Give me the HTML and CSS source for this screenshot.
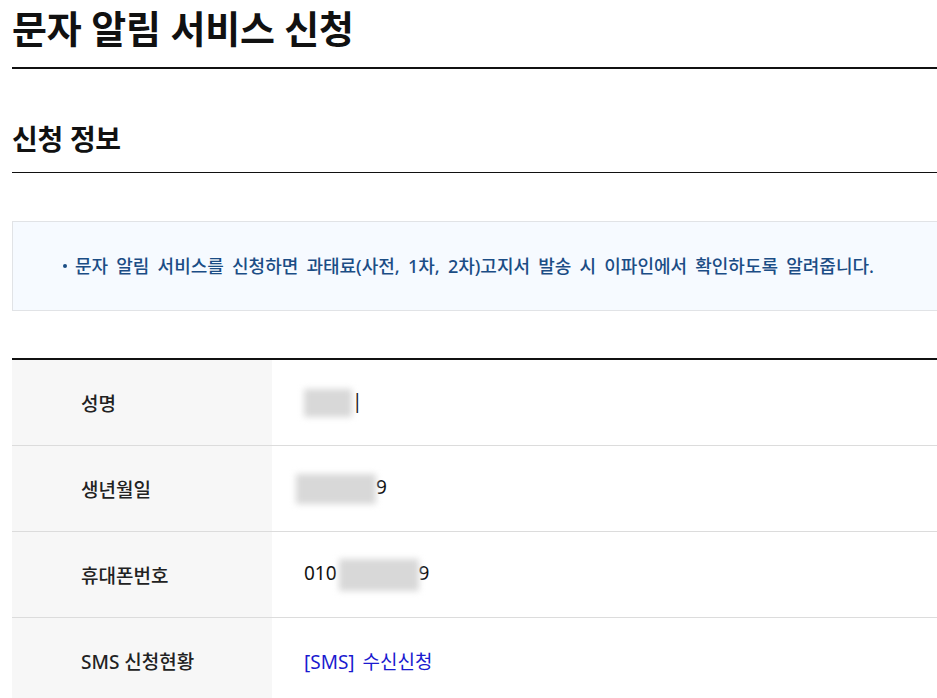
FILE: index.html
```html
<!DOCTYPE html>
<html lang="ko">
<head>
<meta charset="utf-8">
<title>문자 알림 서비스 신청</title>
<link rel="stylesheet" href="styles.css">
</head>
<body>
<div class="page">
  <h1 class="page-title">문자 알림 서비스 신청</h1>
  <h2 class="section-title">신청 정보</h2>
  <div class="notice">
    <ul class="notice-list">
      <li class="notice-item"><span class="dot"></span>문자 알림 서비스를 신청하면 과태료(사전, 1차, 2차)고지서 발송 시 이파인에서 확인하도록 알려줍니다.</li>
    </ul>
  </div>
  <table class="info-table">
    <tbody>
      <tr>
        <th>성명</th>
        <td><span class="mask mask-name"></span><span class="tail">|</span></td>
      </tr>
      <tr>
        <th>생년월일</th>
        <td><span class="mask mask-birth"></span>9</td>
      </tr>
      <tr>
        <th>휴대폰번호</th>
        <td>010<span class="mask mask-phone"></span>9</td>
      </tr>
      <tr>
        <th>SMS 신청현황</th>
        <td><a class="sms-link" href="#">[SMS] 수신신청</a></td>
      </tr>
    </tbody>
  </table>
</div>
</body>
</html>
```
FILE: styles.css
```css
html, body {
  margin: 0;
  padding: 0;
  background: #fff;
  overflow: hidden;
}
body {
  font-family: "Noto Sans", "Noto Sans CJK KR", sans-serif;
  color: #111;
}
.page {
  width: 1100px;
  padding-left: 12px;
}
.page-title {
  margin: 0;
  font-size: 38px;
  font-weight: 700;
  line-height: 56px;
  padding-bottom: 11px;
  border-bottom: 2px solid #111;
  letter-spacing: -0.2px;
}
.section-title {
  margin: 50px 0 0;
  font-size: 28px;
  font-weight: 700;
  line-height: 40px;
  padding-bottom: 13px;
  border-bottom: 1px solid #111;
  letter-spacing: -0.3px;
}
.notice {
  margin-top: 48px;
  background: #f6faff;
  border: 1px solid #e1e3e6;
  padding: 31px 0 31px 50px;
}
.notice-list {
  list-style: none;
  margin: 0;
  padding: 0;
}
.notice-item {
  font-size: 18px;
  font-weight: 500;
  line-height: 26px;
  color: #1b4d85;
  display: flex;
  align-items: center;
  word-spacing: 3.5px;
}
.dot {
  width: 4px;
  height: 4px;
  border-radius: 50%;
  background: #1b4d85;
  margin-right: 8px;
}
.info-table {
  margin-top: 47px;
  width: 100%;
  border-collapse: collapse;
  border-top: 2px solid #111;
}
.info-table th,
.info-table td {
  height: 85px;
  padding: 0;
  border-bottom: 1px solid #dcdcdc;
  font-size: 19px;
  vertical-align: middle;
  text-align: left;
}
.info-table th {
  width: 191px;
  padding-left: 69px;
  background: #f7f7f7;
  font-weight: 500;
  color: #222;
}
.info-table td {
  padding-left: 32px;
  color: #111;
}
.mask {
  display: inline-block;
  vertical-align: middle;
  background: #d8d8d8;
  filter: blur(3px);
}
.mask-name {
  width: 48px;
  height: 28px;
}
.mask-birth {
  width: 80px;
  height: 30px;
  margin-left: -8px;
}
.mask-phone {
  width: 80px;
  height: 32px;
  margin-left: 2px;
}
.tail {
  font-weight: 400;
}
.sms-link {
  color: #1a1acf;
  text-decoration: none;
  word-spacing: 3px;
}
```
